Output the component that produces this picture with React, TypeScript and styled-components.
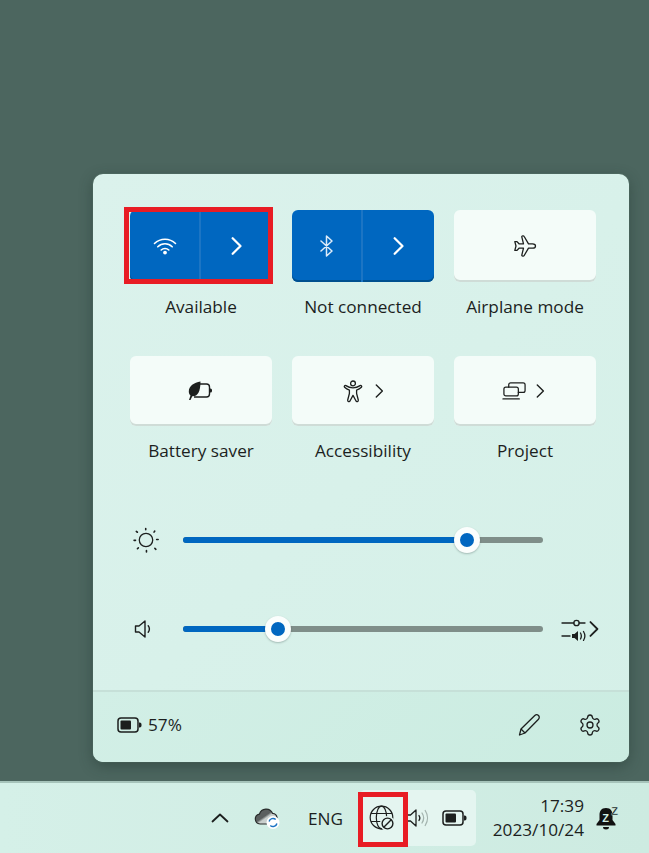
import React from 'react';
import styled, { createGlobalStyle } from 'styled-components';
import { Settings } from 'lucide-react';

const Global = createGlobalStyle`
    html, body {
        margin: 0;
        padding: 0;
        background: #4c665f;
    }
    body {
        font-family: "Open Sans", "Noto Sans", "Liberation Sans", sans-serif;
        color: #1c1f1e;
    }
`

const Screen = styled.div`
    width: 649px;
    height: 853px;
    display: flex;
    flex-direction: column;
    overflow: hidden;
`

const Desktop = styled.div`
    flex: 1;
    padding: 174px 0 0 93px;
    background: #4c665f;
`

const Panel = styled.div`
    width: 536px;
    height: 588px;
    box-sizing: border-box;
    display: flex;
    flex-direction: column;
    border-radius: 10px;
    background: linear-gradient(135deg, #dbf2ec 0%, #d5f0e8 100%);
    box-shadow: 0 4px 14px rgba(30, 50, 45, 0.45), 0 0 0 1px rgba(90, 120, 110, 0.5);
`

const Body = styled.div`
    padding: 36px 33px 0 37px;
`

const TileGrid = styled.div`
    display: grid;
    grid-template-columns: repeat(3, 142px);
    column-gap: 20px;
    row-gap: 0;
`

const Cell = styled.div<{ $short?: boolean }>`
    height: ${props => props.$short ? "106px" : "146px"};
    display: flex;
    flex-direction: column;
    align-items: center;
`

const Tile = styled.div<{ $active?: boolean, $short?: boolean }>`
    position: relative;
    width: 142px;
    height: ${props => props.$short ? "70px" : "72px"};
    flex: none;
    box-sizing: border-box;
    display: flex;
    align-items: center;
    justify-content: center;
    gap: 12px;
    border-radius: 6px;
    ${props => props.$active ?
        "background: #0067c0; box-shadow: inset 0 -2px 0 #00508f;" :
        "background: #f4fcf9; box-shadow: inset 0 -2px 0 #cfdcd7;"
    }
`

const SplitTile = styled(Tile)`
    gap: 0;
`

const ProjectTile = styled(Tile)`
    gap: 9px;
    padding-right: 3px;
`

const SplitPart = styled.div<{ $first?: boolean }>`
    width: 71px;
    height: 100%;
    display: flex;
    align-items: center;
    justify-content: center;
    ${props => props.$first ? "border-right: 2px solid #1c75c4; box-sizing: border-box;" : ""}
`

const Label = styled.div`
    margin-top: 14px;
    height: 22px;
    line-height: 21px;
    font-size: 17.2px;
    white-space: nowrap;
    text-align: center;
`

const RedFrame = styled.div`
    position: absolute;
    box-sizing: border-box;
    border: 5px solid #e81c24;
    pointer-events: none;
`

const WifiFrame = styled(RedFrame)`
    left: -6px;
    top: -3px;
    width: 149px;
    height: 77px;
`

const GlobeFrame = styled(RedFrame)`
    left: -2px;
    top: 2px;
    width: 50px;
    height: 55px;
`

const Sliders = styled.div`
    margin-top: 62px;
    display: flex;
    flex-direction: column;
    gap: 60px;
`

const SliderRow = styled.div`
    height: 30px;
    display: grid;
    grid-template-columns: 20px 360px auto;
    column-gap: 0;
    align-items: center;
`

const SliderIcon = styled.div<{ $inset?: number }>`
    width: 28px;
    padding-left: ${props => props.$inset || 0}px;
    display: flex;
    justify-content: flex-start;
`

const Track = styled.div`
    position: relative;
    margin-left: 33px;
    width: 360px;
    height: 6px;
    border-radius: 3px;
    background: #7f8e89;
`

const Fill = styled.div`
    height: 100%;
    border-radius: 3px;
    background: #0067c0;
`

const Thumb = styled.div`
    position: absolute;
    top: 3px;
    width: 26px;
    height: 26px;
    margin: -13px 0 0 -13px;
    box-sizing: border-box;
    border: 6px solid #fbfefd;
    border-radius: 50%;
    background: #0067c0;
    box-shadow: 0 1px 2px rgba(40, 60, 55, 0.3);
`

const MixerButton = styled.div`
    margin-left: 51px;
    display: flex;
    align-items: center;
    gap: 2px;
`

const Footer = styled.div`
    margin-top: auto;
    height: 72px;
    box-sizing: border-box;
    display: flex;
    align-items: center;
    padding: 0 27px 5px 24px;
    border-top: 2px solid #c6e0d8;
    border-radius: 0 0 10px 10px;
    background: linear-gradient(135deg, #d2efe6 0%, #cbece1 100%);
`

const BatteryText = styled.div`
    display: flex;
    align-items: center;
    gap: 6px;
    font-size: 17.2px;
`

const FooterActions = styled.div`
    margin-left: auto;
    display: flex;
    align-items: center;
    gap: 37px;
`

const Taskbar = styled.div`
    height: 70px;
    flex: none;
    display: flex;
    align-items: center;
    padding-left: 204px;
    border-top: 2px solid #a6c3ba;
    box-sizing: content-box;
    margin-top: -2px;
    background: linear-gradient(90deg, #d5f0e8 0%, #cdebe1 100%);
`

const SysIcon = styled.div<{ $w: number }>`
    width: ${props => props.$w}px;
    height: 56px;
    flex: none;
    display: flex;
    align-items: center;
    justify-content: center;
`

const CloudSlot = styled(SysIcon)`
    margin-left: 11px;
`

const Lang = styled.div`
    margin-left: 21px;
    width: 35px;
    font-size: 17.2px;
    text-align: center;
`

const Tray = styled.div`
    position: relative;
    margin-left: 17px;
    width: 116px;
    height: 56px;
    display: flex;
    border-radius: 5px;
    background: #e4f5f0;
`

const Clock = styled.div`
    width: 108px;
    flex: none;
    text-align: right;
    font-size: 17.2px;
    line-height: 24px;
    white-space: nowrap;
`

const BellSlot = styled(SysIcon)`
    margin-left: 11px;
`

const Chevron = ({ size = 18, color = "#fff", width = 2 }: { size?: number, color?: string, width?: number }) => (
    <svg width={size * 0.62} height={size} viewBox="0 0 10 16" fill="none">
        <path d="M1.500 1l7 7-7 7" stroke={color} strokeWidth={width} strokeLinecap="round" strokeLinejoin="round" />
    </svg>
)

const WifiIcon = () => (
    <svg width="24" height="18" viewBox="0 0 24 18" fill="none" stroke="#fff" strokeWidth="1.6" strokeLinecap="round">
        <path d="M1.500 6.500a15 15 0 0 1 21 0" />
        <path d="M4.800 9.800a10.200 10.200 0 0 1 14.400 0" />
        <path d="M8.200 13a5.400 5.400 0 0 1 7.600 0" />
        <circle cx="12" cy="15.600" r="1.900" fill="#fff" stroke="none" />
    </svg>
)

const BluetoothIcon = () => (
    <svg width="15" height="22" viewBox="0 0 15 22" fill="none" stroke="#dcebf8" strokeWidth="1.5" strokeLinejoin="round" strokeLinecap="round">
        <path d="M2 6l11 10-5.500 5V1L13 6 2 16" />
    </svg>
)

const PlaneIcon = () => (
    <svg width="24" height="24" viewBox="0 0 24 24" fill="none" stroke="#1c1f1e" strokeWidth="1.3" strokeLinejoin="round">
        <path d="M22.500 12c0-1.200-1.400-2.200-3-2.200h-4L11.200 2.500c-.5-.9-2.600-.8-2.400.4l1.700 6.900H6L4 7.600H1.800L3 12l-1.200 4.400H4l2-2.200h4.500l-1.700 6.900c-.2 1.200 1.900 1.300 2.400.4l4.300-7.300h4c1.600 0 3-1 3-2.200z" />
    </svg>
)

const BatterySaverIcon = () => (
    <svg width="26" height="20" viewBox="0 0 26 20">
        <path d="M10 3h8.500a3 3 0 0 1 3 3v7a3 3 0 0 1-3 3H6" fill="none" stroke="#1c1f1e" strokeWidth="1.4" />
        <path d="M21.500 7.500h1a1.500 1.500 0 0 1 1.500 1.500v1a1.500 1.500 0 0 1-1.500 1.500h-1z" fill="#1c1f1e" />
        <path d="M12.500 0.500C6 1.500 0.800 5 0.800 10.500c0 1.700.6 3 1.700 3.900L1 19h1.500L4.300 15.300C9.500 15.600 12.500 11 12.500 0.500z" fill="#1c1f1e" />
    </svg>
)

const PersonIcon = () => (
    <svg width="20" height="23" viewBox="0 0 20 23" fill="none" stroke="#1c1f1e" strokeWidth="1.3" strokeLinejoin="round">
        <circle cx="10" cy="3.400" r="2.400" />
        <path d="M1.600 7.200c-.9-.9.2-2.300 1.300-1.600C5 7 7 7.800 10 7.800s5-.8 7.100-2.200c1.100-.7 2.200.7 1.300 1.600-1.300 1.300-3 2.300-4.800 2.900v3.400l1.700 6.500c.4 1.600-1.800 2.300-2.400.8L10 15.400l-2.900 5.400c-.6 1.500-2.800.8-2.400-.8l1.700-6.500v-3.400C4.600 9.500 2.900 8.500 1.600 7.200z" />
    </svg>
)

const ProjectIcon = () => (
    <svg width="25" height="20" viewBox="0 0 26 20" fill="none" stroke="#1c1f1e" strokeWidth="1.3" strokeLinecap="round">
        <rect x="2" y="6" width="15" height="9" rx="2" />
        <path d="M7 6V3.500A2 2 0 0 1 9 1.500h13a2 2 0 0 1 2 2v6a2 2 0 0 1-2 2h-5" />
        <path d="M1 18.200h17" />
    </svg>
)

const SunIcon = () => (
    <svg width="32" height="32" viewBox="0 0 30 30" fill="none" stroke="#1c1f1e" strokeLinecap="round">
        <circle cx="15" cy="15" r="7.200" strokeWidth="1.400" />
        <path strokeWidth="1.700" d="M14.700 2.600v1.400M24.400 5.400l-.8 1.200M28 14.500h-1.600M25.600 25l-1.100-1M15.500 27.800v-1.600M5.800 24.400l1-1M2.200 15.400h1.600M4.600 5.800l1.200.9" />
    </svg>
)

const SpeakerIcon = () => (
    <svg width="18" height="20" viewBox="0 0 18 20" fill="none" stroke="#1c1f1e" strokeWidth="1.4" strokeLinejoin="round" strokeLinecap="round">
        <path d="M1.500 7v6h3.500l6 5V2L5 7z" />
        <path d="M14.200 6.800c1.600 1.700 1.600 4.700 0 6.400" />
    </svg>
)

const MixerIcon = () => (
    <svg width="26" height="24" viewBox="0 0 26 24" fill="none" stroke="#1c1f1e" strokeWidth="1.3" strokeLinecap="round">
        <path d="M1 6h12M18 6h6" />
        <circle cx="15.500" cy="6" r="2.700" />
        <path d="M1 19h8" />
        <path d="M11 17h2.500l3.500-3v10l-3.500-3H11z" fill="#1c1f1e" stroke="none" />
        <path d="M19.500 16c1 1.800 1 4.200 0 6M22.500 14.500c1.600 2.600 1.600 6.400 0 9" />
    </svg>
)

const BatteryIcon = () => (
    <svg width="25" height="16" viewBox="0 0 25 16">
        <rect x="1" y="1" width="20" height="14" rx="3" fill="none" stroke="#1c1f1e" strokeWidth="1.5" />
        <rect x="3.500" y="3.500" width="10.500" height="9" rx="1" fill="#1c1f1e" />
        <path d="M22 5.500h.7A1.800 1.800 0 0 1 24.500 7.300v1.400A1.800 1.800 0 0 1 22.700 10.500H22z" fill="#1c1f1e" />
    </svg>
)

const PencilIcon = () => (
    <svg width="24" height="24" viewBox="0 0 24 24" fill="none" stroke="#1c1f1e" strokeWidth="1.300" strokeLinejoin="round">
        <path d="M2.500 22l1.500-6L17.800 2.500a2.600 2.600 0 0 1 3.700 3.700L8 20z" />
        <path d="M4 16l4 4" />
    </svg>
)

const UpIcon = () => (
    <svg width="18" height="10" viewBox="0 0 18 10" fill="none" stroke="#1c1f1e" strokeWidth="1.8" strokeLinecap="round" strokeLinejoin="round">
        <path d="M1.500 8.500L9 1.500l7.500 7" />
    </svg>
)

const CloudIcon = () => (
    <svg width="26" height="22" viewBox="0 0 26 22">
        <defs>
            <linearGradient id="cloudFill" x1="0" y1="0" x2="1" y2="1">
                <stop offset="0.45" stopColor="#5b5f5f" />
                <stop offset="0.55" stopColor="#c9cfcd" />
            </linearGradient>
        </defs>
        <path d="M6 17a5 5 0 0 1-.6-9.900A7 7 0 0 1 18.600 6.400 5 5 0 0 1 20 16l-2 1z" fill="url(#cloudFill)" stroke="#2a2d2c" strokeWidth="1.2" />
        <circle cx="19" cy="15.500" r="6.500" fill="#fff" />
        <path d="M15.100 14.500a4 4 0 0 1 6.600-2M22.900 16.500a4 4 0 0 1-6.600 2" fill="none" stroke="#1a73c4" strokeWidth="1.500" />
    </svg>
)

const GlobeIcon = () => (
    <svg width="26" height="26" viewBox="0 0 26 26" fill="none" stroke="#1c1f1e" strokeWidth="1.2">
        <circle cx="12.500" cy="12.500" r="11.300" />
        <ellipse cx="12.500" cy="12.500" rx="5.200" ry="11.300" />
        <path d="M2 8.500h21M2 16.500h21" />
        <circle cx="18.500" cy="18.500" r="7.500" fill="#e4f5f0" stroke="none" />
        <circle cx="18.500" cy="18.500" r="5.400" strokeWidth="1.400" />
        <path d="M14.800 22.200l7.400-7.400" strokeWidth="1.400" />
    </svg>
)

const TrayVolumeIcon = () => (
    <svg width="24" height="22" viewBox="0 0 24 22" fill="none" strokeLinejoin="round" strokeLinecap="round">
        <path d="M1 8v6h3.500L10 19V3L4.500 8z" stroke="#1c1f1e" strokeWidth="1.3" />
        <path d="M13 8.500c1 1.500 1 3.500 0 5" stroke="#1c1f1e" strokeWidth="1.3" />
        <path d="M16 6c2 3 2 7 0 10M19.200 3.500c3 4.500 3 10.500 0 15" stroke="#a3b3ae" strokeWidth="1.3" />
    </svg>
)

const BellIcon = () => (
    <svg width="24" height="26" viewBox="0 0 24 26">
        <path d="M11 3C6 3 4.500 6.500 4.500 10v5L1.500 19v1.500h19V19l-3-4v-5C17.500 6.500 16 3 11 3z" fill="#111" />
        <path d="M8 22h6a3 2.500 0 0 1-6 0z" fill="#111" />
        <text x="10.500" y="16.500" textAnchor="middle" fontSize="11" fontWeight="700" fontFamily="Liberation Sans, sans-serif" fill="#d2eee5">Z</text>
        <text x="19.500" y="9.500" textAnchor="middle" fontSize="11" fontWeight="700" fontFamily="Liberation Sans, sans-serif" fill="#111" stroke="#cfece3" strokeWidth="0.300">Z</text>
    </svg>
)

const darkChevron = <Chevron size={14} color="#1c1f1e" width={1.6} />;

export default function App() {
    return (
        <Screen>
            <Global />
            <Desktop>
                <Panel>
                    <Body>
                        <TileGrid>
                            <Cell>
                                <SplitTile $active>
                                    <SplitPart $first><WifiIcon /></SplitPart>
                                    <SplitPart><Chevron /></SplitPart>
                                    <WifiFrame />
                                </SplitTile>
                                <Label>Available</Label>
                            </Cell>
                            <Cell>
                                <SplitTile $active>
                                    <SplitPart $first><BluetoothIcon /></SplitPart>
                                    <SplitPart><Chevron /></SplitPart>
                                </SplitTile>
                                <Label>Not connected</Label>
                            </Cell>
                            <Cell>
                                <Tile><PlaneIcon /></Tile>
                                <Label>Airplane mode</Label>
                            </Cell>
                            <Cell $short>
                                <Tile $short><BatterySaverIcon /></Tile>
                                <Label>Battery saver</Label>
                            </Cell>
                            <Cell $short>
                                <Tile $short><PersonIcon />{darkChevron}</Tile>
                                <Label>Accessibility</Label>
                            </Cell>
                            <Cell $short>
                                <ProjectTile $short><ProjectIcon />{darkChevron}</ProjectTile>
                                <Label>Project</Label>
                            </Cell>
                        </TileGrid>
                        <Sliders>
                            <SliderRow>
                                <SliderIcon $inset={2}><SunIcon /></SliderIcon>
                                <Track>
                                    <Fill style={{ width: "78.8%" }} />
                                    <Thumb style={{ left: "78.8%" }} />
                                </Track>
                            </SliderRow>
                            <SliderRow>
                                <SliderIcon $inset={4}><SpeakerIcon /></SliderIcon>
                                <Track>
                                    <Fill style={{ width: "26.4%" }} />
                                    <Thumb style={{ left: "26.4%" }} />
                                </Track>
                                <MixerButton>
                                    <MixerIcon />
                                    <Chevron size={16} color="#1c1f1e" width={1.8} />
                                </MixerButton>
                            </SliderRow>
                        </Sliders>
                    </Body>
                    <Footer>
                        <BatteryText>
                            <BatteryIcon />
                            57%
                        </BatteryText>
                        <FooterActions>
                            <PencilIcon />
                            <Settings size={24} strokeWidth={1.3} color="#1c1f1e" />
                        </FooterActions>
                    </Footer>
                </Panel>
            </Desktop>
            <Taskbar>
                <SysIcon $w={32}><UpIcon /></SysIcon>
                <CloudSlot $w={40}><CloudIcon /></CloudSlot>
                <Lang>ENG</Lang>
                <Tray>
                    <SysIcon $w={44}><GlobeIcon /></SysIcon>
                    <SysIcon $w={28}><TrayVolumeIcon /></SysIcon>
                    <SysIcon $w={44}><BatteryIcon /></SysIcon>
                    <GlobeFrame />
                </Tray>
                <Clock>
                    17:39<br />2023/10/24
                </Clock>
                <BellSlot $w={24}><BellIcon /></BellSlot>
            </Taskbar>
        </Screen>
    );
}
